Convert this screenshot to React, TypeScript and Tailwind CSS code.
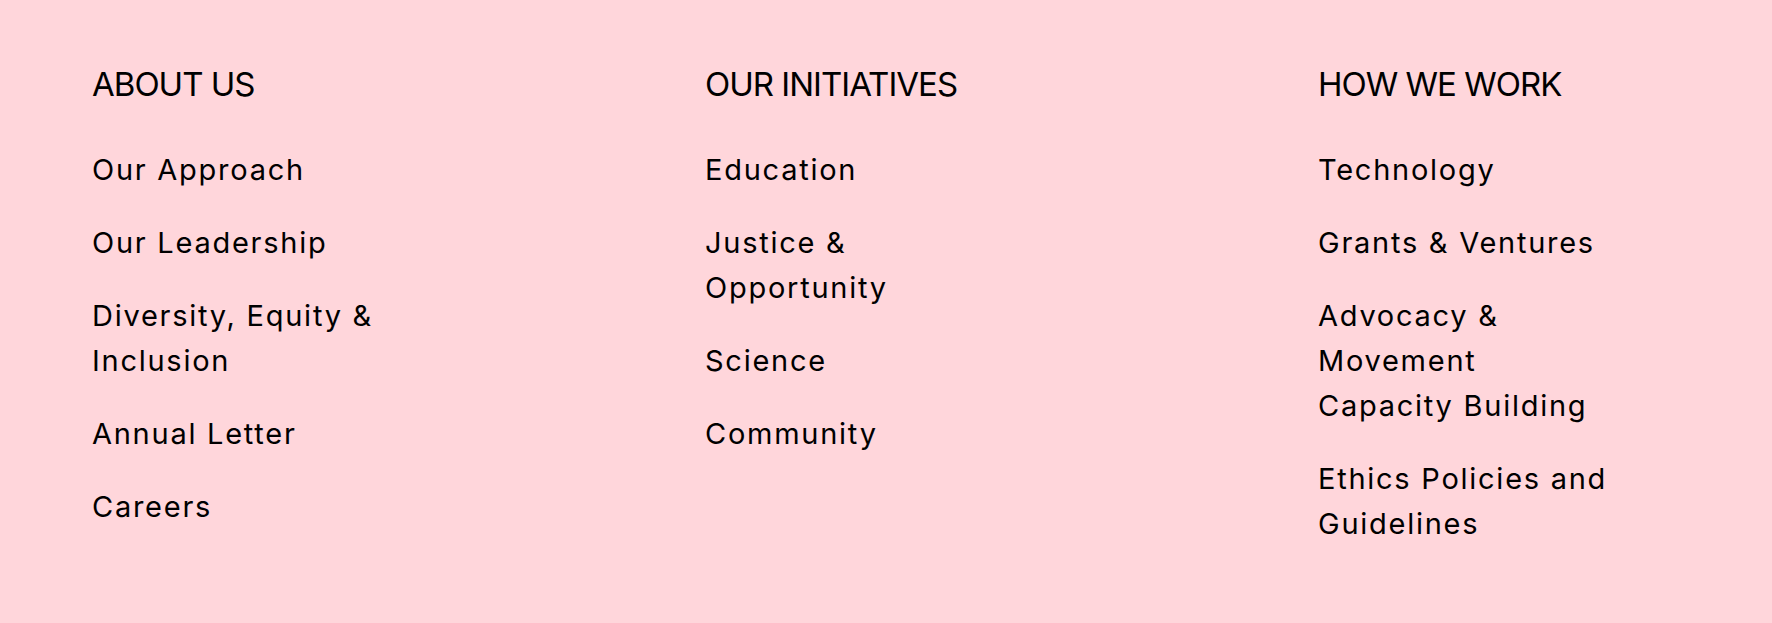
const columns = [
  {
    title: 'ABOUT US',
    links: ['Our Approach', 'Our Leadership', 'Diversity, Equity & Inclusion', 'Annual Letter', 'Careers'],
  },
  {
    title: 'OUR INITIATIVES',
    links: ['Education', 'Justice & Opportunity', 'Science', 'Community'],
  },
  {
    title: 'HOW WE WORK',
    links: ['Technology', 'Grants & Ventures', 'Advocacy & Movement Capacity Building', 'Ethics Policies and Guidelines'],
  },
];

export default function App() {
  return (
    <footer
      className="min-h-[623px] w-full bg-[#ffd6db] text-black pl-[92px] pt-[64px] pb-[60px]"
      style={{ fontFamily: 'Inter, "Liberation Sans", sans-serif' }}
    >
      <div className="flex">
        {columns.map((col) => (
          <div key={col.title} className="w-[613px] shrink-0 last:w-auto">
            <h3 className="text-[33px] leading-[40px] font-normal tracking-[-0.03em]">{col.title}</h3>
            <ul className="mt-[43px] flex flex-col gap-[28px]">
              {col.links.map((link) => (
                <li key={link} className="max-w-[293px] text-[29px] leading-[45px] tracking-[0.06em]">
                  <a href="#">{link}</a>
                </li>
              ))}
            </ul>
          </div>
        ))}
      </div>
    </footer>
  );
}
